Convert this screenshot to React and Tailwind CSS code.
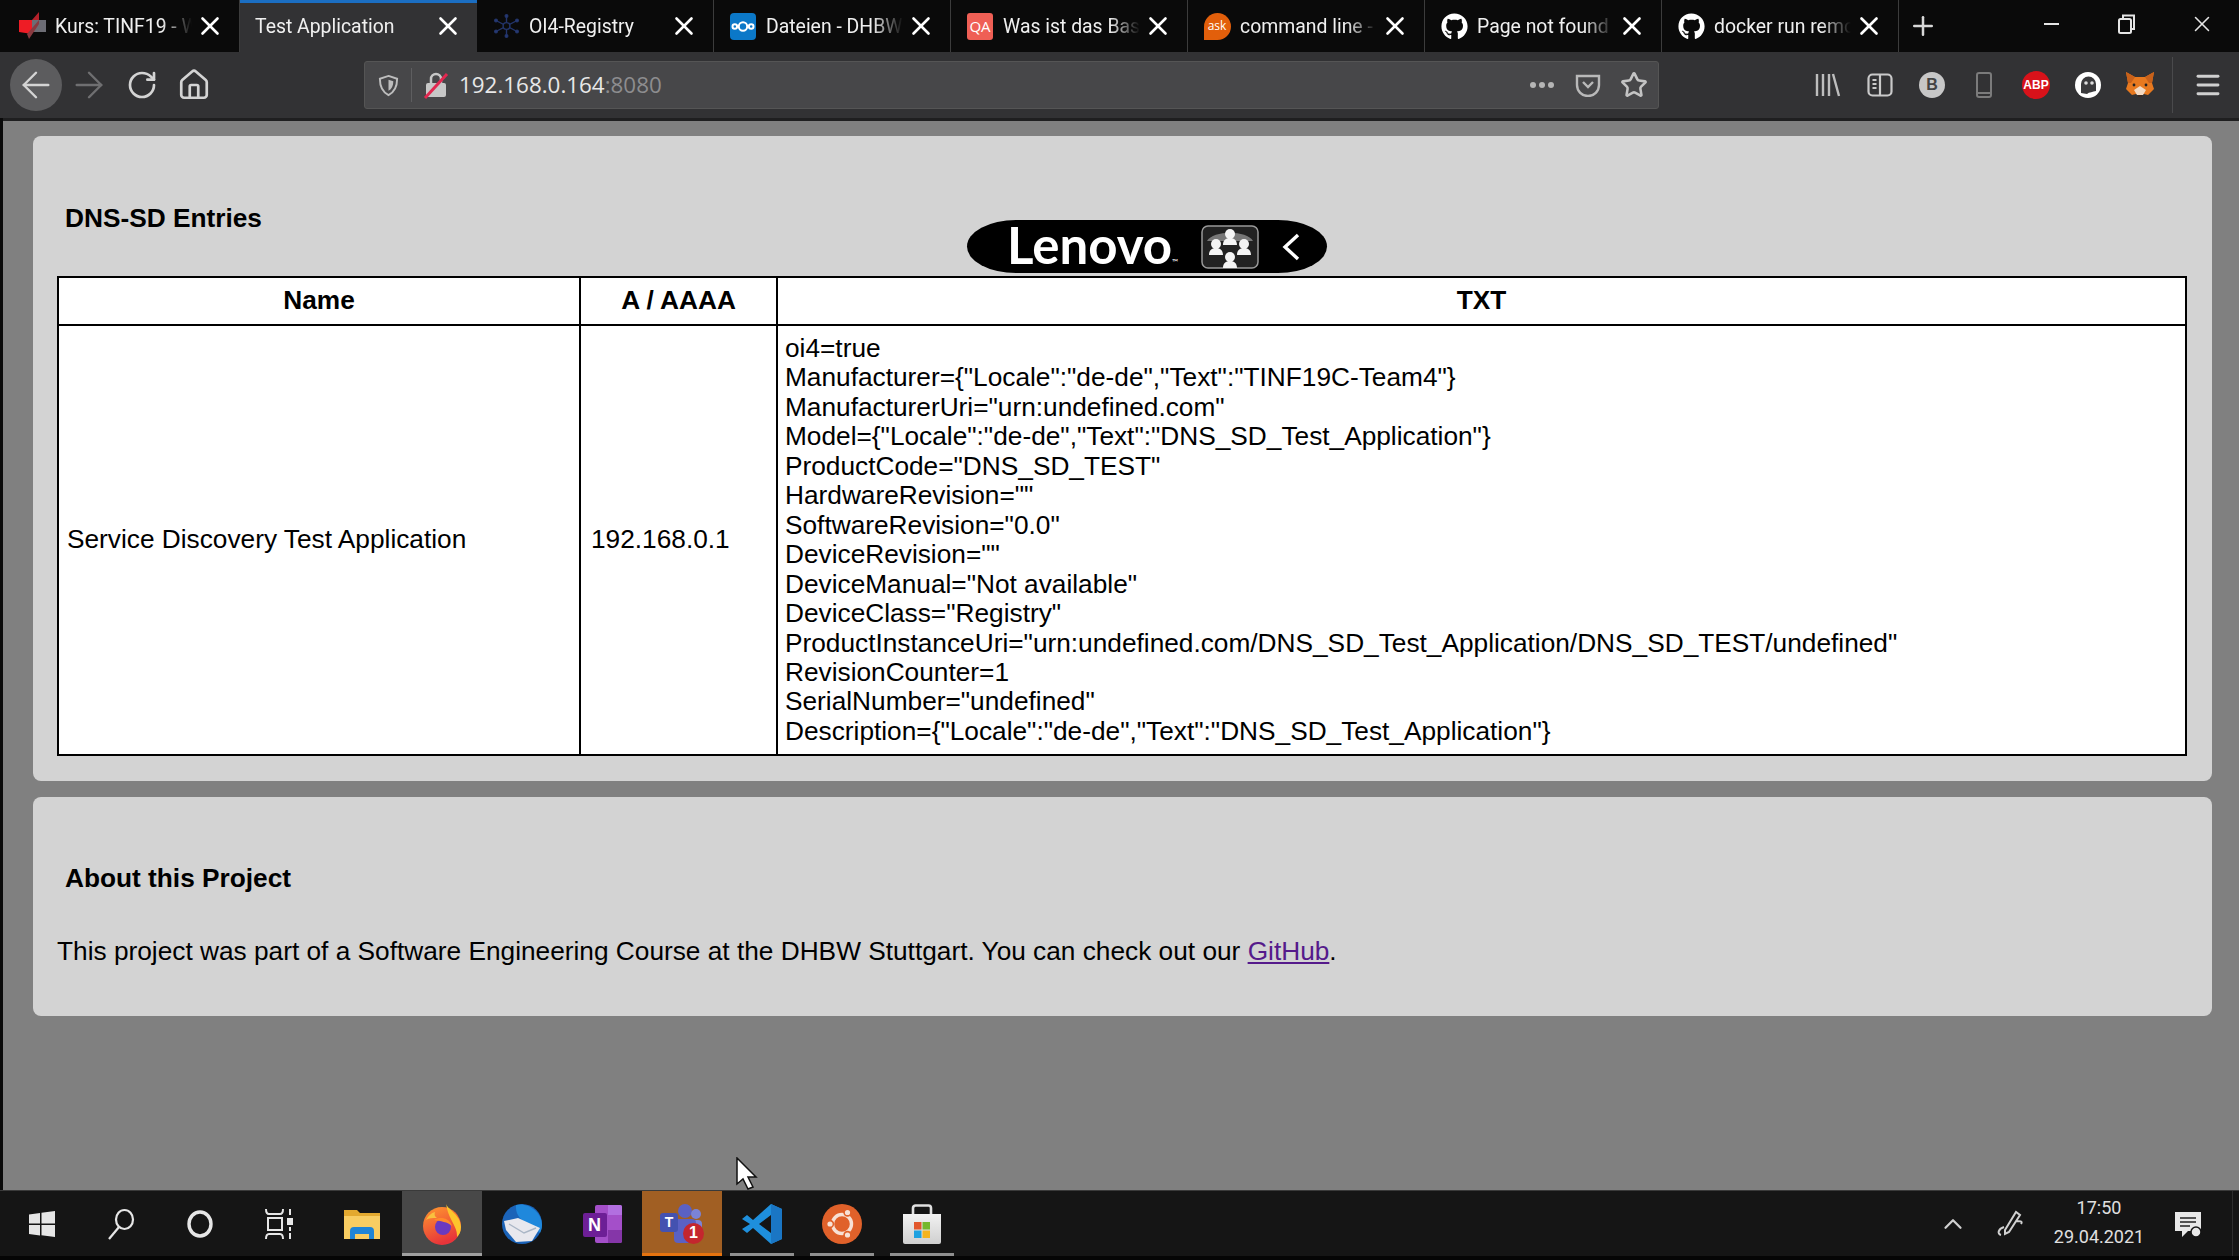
import React from "react";
import { X, Plus, ArrowLeft, ArrowRight, RotateCw, Home, Star, Menu, ChevronUp } from "lucide-react";
import { FaGithub } from "react-icons/fa";

const Moodle = () => (
  <svg width="30" height="28" viewBox="0 0 30 28">
    <path d="M2 8 L15 8 L15 22 L2 20Z" fill="#ee1c25" />
    <path d="M15 8 L29 8 L29 20 L15 20Z" fill="#6d6d75" />
    <path d="M15 8 L22 0 L22 8Z" fill="#b5212a" />
    <path d="M10 22 L22 8 L22 12 L12 27Z" fill="#8a3a40" />
  </svg>
);
const Oi4 = () => (
  <svg width="27" height="24" viewBox="0 0 27 24" stroke="#23356b" strokeWidth="1.4" fill="#2b3f7c">
    <path d="M13.5 1V23M2 6L25 18M25 6L2 18" />
    <circle cx="13.5" cy="12" r="3.4" fill="#0a0a0a" />
    <circle cx="13.5" cy="2" r="1.3" /><circle cx="13.5" cy="22" r="1.3" /><circle cx="3" cy="6.5" r="1.3" />
    <circle cx="24" cy="6.5" r="1.3" /><circle cx="3" cy="17.5" r="1.3" /><circle cx="24" cy="17.5" r="1.3" />
  </svg>
);
const Nextcloud = () => (
  <svg width="26" height="27" viewBox="0 0 26 27">
    <rect width="26" height="27" rx="4" fill="#0b78c8" />
    <g fill="none" stroke="#fff" strokeWidth="2">
      <circle cx="13" cy="13.5" r="4.2" /><circle cx="4.8" cy="13.5" r="2.3" /><circle cx="21.2" cy="13.5" r="2.3" />
    </g>
  </svg>
);
const Qa = () => (
  <div className="flex h-[27px] w-[26px] items-center justify-center rounded-[3px] bg-[#ef5f55] text-[15px] leading-none text-white">QA</div>
);
const Ask = () => (
  <div className="flex h-[27px] w-[27px] items-center justify-center rounded-full rounded-bl-[3px] bg-[#e25f0b] text-[12px] leading-none text-white">ask</div>
);
const Gh = () => <FaGithub className="text-white" size={27} />;

const tabs = [
  { icon: <Moodle />, text: "Kurs: TINF19 - WWI" },
  { text: "Test Application", active: true },
  { icon: <Oi4 />, text: "OI4-Registry" },
  { icon: <Nextcloud />, text: "Dateien - DHBW Cloud" },
  { icon: <Qa />, text: "Was ist das Basis" },
  { icon: <Ask />, text: "command line - docker" },
  { icon: <Gh />, text: "Page not found" },
  { icon: <Gh />, text: "docker run remove" },
];

const Tab = ({ icon, text, active }) => (
  <div
    className={
      "flex h-full w-[237px] shrink-0 items-center pr-[14px] " +
      (active
        ? "border-t-[3px] border-[#1b6ec2] bg-[#323234] pl-[15px]"
        : "border-r border-[#3c3c3c] pl-[11px]")
    }
  >
    {icon && <div className="mr-[5px] flex w-[36px] shrink-0 items-center justify-center">{icon}</div>}
    <span
      className={
        "flex-1 overflow-hidden whitespace-nowrap font-['Roboto'] text-[19.4px] leading-[26px] text-[#f0f0f0] " +
        (active ? "mt-[-2px] " : "mt-[1px] ") +
        "[mask-image:linear-gradient(to_right,#000_78%,transparent_100%)]"
      }
    >
      {text}
    </span>
    <X size={30} strokeWidth={2.1} className={"ml-[3px] shrink-0 text-white " + (active ? "mt-[-3px]" : "")} />
  </div>
);

const Slot = ({ w = "w-[52px]", children }) => (
  <div className={w + " flex h-full shrink-0 items-center justify-center"}>{children}</div>
);

const Shield = ({ size = 24, color = "#bdbdbd" }) => (
  <svg width={size} height={size} viewBox="0 0 24 24" fill="none" stroke={color} strokeWidth="2">
    <path d="M12 2 21 5c0 9-3 14-9 17C6 19 3 14 3 5Z" />
    <path d="M12 6 17 7.6c0 5-1.5 8-5 10Z" fill={color} stroke="none" />
  </svg>
);
const BrokenLock = () => (
  <svg width="26" height="28" viewBox="0 0 26 28">
    <path d="M8 12V8a5 5 0 0 1 10 0v4" fill="none" stroke="#c7c7c7" strokeWidth="2.5" />
    <rect x="3" y="12" width="20" height="14" rx="2" fill="#c7c7c7" />
    <path d="M2 27 24 3" stroke="#e22850" strokeWidth="3" />
  </svg>
);
const Pocket = () => (
  <svg width="26" height="24" viewBox="0 0 26 24" fill="none" stroke="#b9b9b9" strokeWidth="2.4">
    <path d="M2 3h22v9a11 11 0 0 1-22 0Z" />
    <path d="M8 9l5 5 5-5" />
  </svg>
);
const Library = () => (
  <svg width="26" height="24" viewBox="0 0 26 24" stroke="#bdbdbd" strokeWidth="2.4" fill="none">
    <path d="M2 1v22M8 1v22M14 1v22M18 1l6 22" />
  </svg>
);
const Sidebar = () => (
  <svg width="26" height="24" viewBox="0 0 26 24" fill="none" stroke="#c9c9c9" strokeWidth="2.2">
    <rect x="1.5" y="1.5" width="23" height="21" rx="4" />
    <path d="M13 2v20M5.5 7h4M5.5 11h4M5.5 15h4" />
  </svg>
);
const Phone = () => (
  <svg width="16" height="26" viewBox="0 0 16 26" fill="none" stroke="#7b7b7b" strokeWidth="2">
    <rect x="1" y="1" width="14" height="24" rx="2" />
    <path d="M1 21h14" />
  </svg>
);
const Ghostery = () => (
  <svg width="26" height="26" viewBox="0 0 26 26">
    <circle cx="13" cy="13" r="13" fill="#fff" />
    <path d="M6 21V12a7.5 7.5 0 0 1 15 0v7c-3 1-7 1-9 3Z" fill="#3a3a3c" />
    <circle cx="11" cy="11" r="1.8" fill="#ddd" /><circle cx="17" cy="11" r="1.8" fill="#ddd" />
  </svg>
);
const Fox = () => (
  <svg width="28" height="26" viewBox="0 0 28 26">
    <path d="M0 0l9 5h10l9-5-2 11 2 6-6 6-4-1h-8l-4 1-6-6 2-6Z" fill="#e8791f" />
    <path d="M0 0l9 5-4 6H2ZM28 0l-9 5 4 6h3Z" fill="#c9611a" />
    <path d="M8 18l6-4 6 4-3 5h-6Z" fill="#f3d9c2" />
    <path d="M12 23h4v2h-4Z" fill="#3a2a20" />
    <circle cx="8" cy="13" r="1.4" fill="#222" /><circle cx="20" cy="13" r="1.4" fill="#222" />
  </svg>
);
const Restore = () => (
  <svg width="20" height="22" viewBox="0 0 20 22" fill="none" stroke="#e5e5e5" strokeWidth="2">
    <rect x="2" y="6" width="12" height="14" rx="1.5" />
    <path d="M6 6V2.5h11V16h-3" />
  </svg>
);

const Firefox = () => (
  <svg width="38" height="42" viewBox="0 0 38 42">
    <defs>
      <linearGradient id="ffx" x1="0" y1="0" x2="0.4" y2="1">
        <stop offset="0" stopColor="#ff9a2e" />
        <stop offset="1" stopColor="#e8343a" />
      </linearGradient>
    </defs>
    <circle cx="19" cy="23" r="19" fill="url(#ffx)" />
    <path d="M23 0c0 6 15 11 15 24 0 5-2 8-4 10 1-11-9-17-11-34Z" fill="#fdc42c" />
    <circle cx="20" cy="24" r="8" fill="#6a3ac0" />
    <path d="M11 17c6-4 16-2 18 6-4-4-12-5-18-6Z" fill="#ff8a2b" />
    <path d="M3 17c2-4 5-7 9-8-1 3 0 5 2 6-5 0-8 0-11 2Z" fill="#f9c13f" />
  </svg>
);
const Thunderbird = () => (
  <svg width="40" height="40" viewBox="0 0 40 40">
    <circle cx="20" cy="20" r="20" fill="#1b63b8" />
    <path d="M14 1c12-3 26 7 26 20 0 3-1 6-2 8L28 20C20 18 13 11 14 1Z" fill="#1f88dc" />
    <path d="M2 17l14-3 22 10-8 13-16 1-10-12Z" fill="#e8e8ee" />
    <path d="M7 20l15 9 12-5" fill="none" stroke="#aab6c6" strokeWidth="1.4" />
  </svg>
);
const OneNote = () => (
  <div className="relative h-[38px] w-[39px]">
    <div className="absolute right-0 top-0 h-[38px] w-[27px] rounded-[2px] bg-[#a44fc9]" />
    <div className="absolute right-0 top-0 h-[10px] w-[14px] rounded-tr-[2px] bg-[#b26fe0]" />
    <div className="absolute bottom-0 right-0 h-[13px] w-[14px] rounded-br-[2px] bg-[#8536a8]" />
    <div className="absolute left-0 top-[8px] flex h-[24px] w-[24px] items-center justify-center rounded-[2px] bg-[#6d1f96] font-['Liberation_Sans'] text-[18px] font-bold leading-none text-white">N</div>
  </div>
);
const Teams = () => (
  <div className="relative h-[40px] w-[44px]">
    <div className="absolute left-[18px] top-0 h-[14px] w-[14px] rounded-full bg-[#5a61c4]" />
    <div className="absolute left-[31px] top-[5px] h-[10px] w-[10px] rounded-full bg-[#7b83d6]" />
    <div className="absolute left-[32px] top-[16px] h-[14px] w-[10px] rounded-[4px] bg-[#7b83d6]" />
    <div className="absolute left-[14px] top-[15px] h-[24px] w-[22px] rounded-[4px] bg-[#5a61c4]" />
    <div className="absolute left-0 top-[9px] flex h-[19px] w-[18px] items-center justify-center rounded-[3px] bg-[#4452b0] font-['Liberation_Sans'] text-[14px] font-bold leading-none text-white">T</div>
    <div className="absolute bottom-0 right-0 flex h-[21px] w-[21px] items-center justify-center rounded-full bg-[#c4262e] font-['Liberation_Sans'] text-[16px] font-bold leading-none text-white">1</div>
  </div>
);
const VSCode = () => (
  <svg width="40" height="40" viewBox="0 0 40 40">
    <path fillRule="evenodd" d="M29 0 40 5V35L29 40 11 24 5 29 0 25 8 20 0 15 5 11 11 16ZM29 11 17 20 29 29Z" fill="#1e8fdc" />
    <path fillRule="evenodd" d="M29 0 40 5V35L29 40V29 11Z" fill="#1a76c4" />
  </svg>
);
const Ubuntu = () => (
  <svg width="40" height="40" viewBox="0 0 40 40">
    <circle cx="20" cy="20" r="20" fill="#e0612a" />
    <circle cx="20" cy="20" r="9.5" fill="none" stroke="#f7e1d5" strokeWidth="3.4" />
    <g stroke="#e0612a" strokeWidth="1.6" fill="#f7e1d5">
      <circle cx="25.5" cy="8.5" r="3.4" /><circle cx="8" cy="20" r="3.4" /><circle cx="25.5" cy="31" r="3.4" />
    </g>
  </svg>
);
const Store = () => (
  <svg width="40" height="40" viewBox="0 0 40 40">
    <defs>
      <linearGradient id="sto" x1="0" y1="0" x2="0" y2="1">
        <stop offset="0" stopColor="#f2f2f2" />
        <stop offset="1" stopColor="#cfcfcf" />
      </linearGradient>
    </defs>
    <path d="M11 11V4a2.5 2.5 0 0 1 2.5-2.5h13A2.5 2.5 0 0 1 29 4v7" fill="none" stroke="#e0e0e0" strokeWidth="2.6" />
    <path d="M1 10h38v28a2 2 0 0 1-2 2H3a2 2 0 0 1-2-2Z" fill="url(#sto)" />
    <rect x="12" y="18" width="7.5" height="7.5" fill="#e2572c" /><rect x="20.5" y="18" width="7.5" height="7.5" fill="#75b82c" />
    <rect x="12" y="26.5" width="7.5" height="7.5" fill="#1ea1e0" /><rect x="20.5" y="26.5" width="7.5" height="7.5" fill="#f4b31f" />
  </svg>
);
const Explorer = () => (
  <svg width="36" height="30" viewBox="0 0 36 30">
    <path d="M0 1h13l3 3h20v26H0Z" fill="#e3a92f" />
    <path d="M0 7h36v23H0Z" fill="#f8cd62" />
    <path d="M6 30V22a4 4 0 0 1 4-4h16a4 4 0 0 1 4 4v8h-5v-5H11v5Z" fill="#1e84d6" />
  </svg>
);

const TaskSlot = ({ children, bar, bg }) => (
  <div className={"relative flex h-full w-[80px] shrink-0 items-center justify-center " + (bg || "")}>
    {children}
    {bar && <div className={"absolute bottom-0 left-[8px] right-[8px] h-[3px] " + bar} />}
  </div>
);

const txt = [
  "oi4=true",
  'Manufacturer={"Locale":"de-de","Text":"TINF19C-Team4"}',
  'ManufacturerUri="urn:undefined.com"',
  'Model={"Locale":"de-de","Text":"DNS_SD_Test_Application"}',
  'ProductCode="DNS_SD_TEST"',
  'HardwareRevision=""',
  'SoftwareRevision="0.0"',
  'DeviceRevision=""',
  'DeviceManual="Not available"',
  'DeviceClass="Registry"',
  'ProductInstanceUri="urn:undefined.com/DNS_SD_Test_Application/DNS_SD_TEST/undefined"',
  "RevisionCounter=1",
  'SerialNumber="undefined"',
  'Description={"Locale":"de-de","Text":"DNS_SD_Test_Application"}',
];

export default function App() {
  return (
    <div className="relative flex h-[1260px] w-[2239px] flex-col overflow-hidden bg-[#0a0a0a] font-['Open_Sans',sans-serif]">
      {/* tab strip */}
      <div className="flex h-[52px] shrink-0 items-stretch bg-[#0a0a0a] pl-[3px]">
        {tabs.map((t) => (
          <Tab key={t.text} {...t} />
        ))}
        <div className="flex w-[47px] items-center justify-center">
          <Plus size={30} strokeWidth={2} className="text-[#d8d8d8]" />
        </div>
        <div className="flex flex-1 items-start justify-end pt-[8px] text-[#e5e5e5]">
          <div className="flex h-[32px] w-[75px] items-center justify-center"><div className="h-[2px] w-[15px] bg-[#e5e5e5]" /></div>
          <div className="flex h-[32px] w-[75px] items-center justify-center"><Restore /></div>
          <div className="flex h-[32px] w-[75px] items-center justify-center"><X size={26} strokeWidth={1.4} /></div>
        </div>
      </div>

      {/* toolbar */}
      <div className="flex h-[66px] shrink-0 items-center bg-[#323234] pl-[10px]">
        <div className="flex h-[52px] w-[52px] shrink-0 items-center justify-center rounded-full bg-[#5c5c5e]">
          <ArrowLeft size={42} strokeWidth={1.4} className="text-[#d4d4d4]" />
        </div>
        <Slot w="w-[54px]"><ArrowRight size={42} strokeWidth={1.4} className="text-[#6f6f71]" /></Slot>
        <Slot w="w-[52px]"><RotateCw size={32} strokeWidth={2} className="text-[#d4d4d4]" /></Slot>
        <Slot w="w-[52px]"><Home size={34} strokeWidth={1.9} className="text-[#d4d4d4]" /></Slot>
        <div className="ml-[144px] flex h-[48px] w-[1295px] shrink-0 items-center rounded-[3px] border border-[#555] bg-[#474749]">
          <div className="flex w-[46px] items-center justify-center"><Shield size={23} /></div>
          <div className="h-[34px] w-px bg-[#5e5e60]" />
          <div className="flex w-[47px] items-center justify-center"><BrokenLock /></div>
          <div className="flex-1 text-[22.4px] leading-none text-[#e8e8e8]">
            192.168.0.164<span className="text-[#8d8d8f]">:8080</span>
          </div>
          <div className="flex w-[46px] items-center justify-center gap-[3px]">
            <div className="h-[6px] w-[6px] rounded-full bg-[#b5b5b5]" />
            <div className="h-[6px] w-[6px] rounded-full bg-[#b5b5b5]" />
            <div className="h-[6px] w-[6px] rounded-full bg-[#b5b5b5]" />
          </div>
          <div className="flex w-[46px] items-center justify-center"><Pocket /></div>
          <div className="mr-[1px] flex w-[46px] items-center justify-center"><Star size={28} strokeWidth={2.2} className="text-[#c4c4c4]" /></div>
        </div>
        <div className="ml-[143px] flex h-full items-center">
          <Slot><Library /></Slot>
          <Slot><Sidebar /></Slot>
          <Slot>
            <div className="flex h-[26px] w-[26px] items-center justify-center rounded-full bg-[#c7c7c7] font-['Liberation_Sans'] text-[16px] font-bold leading-none text-[#444]">B</div>
          </Slot>
          <Slot><Phone /></Slot>
          <Slot>
            <div className="flex h-[28px] w-[28px] items-center justify-center rounded-full bg-[#d8121a] font-['Liberation_Sans'] text-[12px] font-bold leading-none text-white">ABP</div>
          </Slot>
          <Slot><Ghostery /></Slot>
          <Slot><Fox /></Slot>
          <div className="ml-[6px] h-[56px] w-px bg-[#4a4a4c]" />
          <Slot w="w-[70px]"><Menu size={30} strokeWidth={2.3} className="text-[#d0d0d0]" /></Slot>
        </div>
      </div>

      {/* page */}
      <div className="ml-[3px] flex flex-1 flex-col gap-[16px] border-t-[3px] border-[#1f1f20] bg-[#808080] pl-[30px] pr-[27px] pt-[15px] font-['Liberation_Sans',Arial,sans-serif] text-[26.25px] text-black">
        <section className="relative rounded-[8px] bg-[#d3d3d3] px-[24px] pb-[25px] pt-[64px]">
          <h2 className="mb-[40px] pl-[8px] text-[26.25px] font-bold leading-[36px]">DNS-SD Entries</h2>
          <div className="absolute left-[934px] top-[84px] flex h-[53px] w-[360px] items-center rounded-[50px/27px] bg-black pl-[40px] text-white">
            <span className="mt-[-4px] w-[194px] whitespace-nowrap font-['Lato'] text-[51px] font-bold leading-none">Lenovo<span className="align-[-1px] text-[8px] font-normal">™</span></span>
            <svg width="58" height="44" viewBox="0 0 58 44" className="shrink-0">
              <rect x="1" y="1" width="56" height="42" rx="6" fill="#222" stroke="#999" strokeWidth="1.5" />
              <path d="M6 16C12 5 46 5 52 16Z" fill="#777" />
              {[[29, 9], [15, 19], [43, 19], [29, 32]].map(([x, y]) => (
                <g key={x + "-" + y} fill="#f4f4f4">
                  <circle cx={x} cy={y} r="5" />
                  <path d={`M${x - 7} ${y + 11}c0-5 3-6 5-7h4c2 1 5 2 5 7Z`} />
                </g>
              ))}
            </svg>
            <svg width="18" height="28" viewBox="0 0 18 28" className="ml-[23px] shrink-0" fill="none" stroke="#fff" strokeWidth="3.4">
              <path d="M16 2 3 14l13 12" />
            </svg>
          </div>
          <table className="w-[2130px] table-fixed border-collapse bg-white leading-[29.46px]">
            <colgroup>
              <col className="w-[522px]" />
              <col className="w-[197px]" />
              <col />
            </colgroup>
            <thead>
              <tr>
                <th className="h-[48px] border-2 border-black p-0 text-center font-bold">Name</th>
                <th className="h-[48px] border-2 border-black p-0 text-center font-bold">A / AAAA</th>
                <th className="h-[48px] border-2 border-black p-0 text-center font-bold">TXT</th>
              </tr>
            </thead>
            <tbody>
              <tr>
                <td className="border-2 border-black py-0 pl-[8px] pr-0">Service Discovery Test Application</td>
                <td className="border-2 border-black py-0 pl-[10px] pr-0">192.168.0.1</td>
                <td className="border-2 border-black pb-[8px] pl-[7px] pr-0 pt-[8px]">
                  {txt.map((l) => (
                    <div key={l} className="whitespace-nowrap">{l}</div>
                  ))}
                </td>
              </tr>
            </tbody>
          </table>
        </section>
        <section className="h-[219px] rounded-[8px] bg-[#d3d3d3] px-[24px] pt-[63px]">
          <h2 className="mb-[37px] pl-[8px] text-[26.25px] font-bold leading-[36px]">About this Project</h2>
          <p className="leading-[36px]">
            This project was part of a Software Engineering Course at the DHBW Stuttgart. You can check out our{" "}
            <a className="text-[#551a8b] underline" href="#github">GitHub</a>.
          </p>
        </section>
      </div>

      {/* taskbar */}
      <div className="flex h-[66px] shrink-0 items-stretch border-t border-[#3a3a3a] bg-[#151515] pl-[2px]">
        <TaskSlot>
          <svg width="30" height="30" viewBox="0 0 30 30" fill="#e6e6e6">
            <path d="M2 5.5 13 4v10.5H2ZM14.5 3.8 28 2v12.5H14.5ZM2 16h11v10.5L2 25ZM14.5 16H28v12l-13.5-1.8Z" />
          </svg>
        </TaskSlot>
        <TaskSlot>
          <svg width="30" height="32" viewBox="0 0 30 32" fill="none" stroke="#e6e6e6" strokeWidth="2.2" className="-translate-x-[1px]">
            <ellipse cx="18.5" cy="11.5" rx="8.5" ry="9.5" /><path d="M13 19 3 31" />
          </svg>
        </TaskSlot>
        <TaskSlot>
          <svg width="28" height="30" viewBox="0 0 28 30" fill="none" stroke="#e6e6e6" strokeWidth="3.4" className="-translate-x-[2px]">
            <ellipse cx="14" cy="15" rx="11" ry="12" />
          </svg>
        </TaskSlot>
        <TaskSlot>
          <svg width="28" height="32" viewBox="0 0 28 32" fill="none" stroke="#e6e6e6" strokeWidth="2" className="-translate-x-[3px]">
            <path d="M1 1c0 4 1 5 3 5h11c2 0 3-1 3-5M1 31c0-4 1-5 3-5h11c2 0 3 1 3 5" />
            <rect x="3" y="10" width="14" height="12" /><path d="M25 1v6M25 25v6" /><rect x="23" y="11" width="4" height="5" fill="#e6e6e6" /><path d="M25 19v4" />
          </svg>
        </TaskSlot>
        <TaskSlot><Explorer /></TaskSlot>
        <TaskSlot bg="bg-[#484848]" bar="!left-0 !right-0 bg-[#a0a0a0]"><Firefox /></TaskSlot>
        <TaskSlot><Thunderbird /></TaskSlot>
        <TaskSlot><OneNote /></TaskSlot>
        <TaskSlot bg="bg-[#a15f23]" bar="!left-0 !right-0 bg-[#e5730f]"><Teams /></TaskSlot>
        <TaskSlot bar="bg-[#8f8f8f]"><VSCode /></TaskSlot>
        <TaskSlot bar="bg-[#8f8f8f]"><Ubuntu /></TaskSlot>
        <TaskSlot bar="bg-[#8f8f8f]"><Store /></TaskSlot>
        <div className="flex-1" />
        <div className="flex w-[58px] items-center justify-center"><ChevronUp size={30} strokeWidth={1.8} className="text-[#d0d0d0]" /></div>
        <div className="flex w-[58px] items-center justify-center">
          <svg width="30" height="30" viewBox="0 0 30 30" fill="none" stroke="#d0d0d0" strokeWidth="2">
            <path d="M9 21 20 3l4 3-11 17-4 2ZM20 12c4 0 7 0 5 3M8 18c-6 2-7 7-3 8" />
          </svg>
        </div>
        <div className="flex w-[118px] flex-col items-center justify-center gap-[9px] pb-[3px] text-[#e0e0e0]">
          <span className="font-['Roboto'] text-[18px] leading-[20px]">17:50</span>
          <span className="font-['Roboto'] text-[18px] leading-[20px]">29.04.2021</span>
        </div>
        <div className="flex w-[60px] items-center justify-center">
          <svg width="28" height="28" viewBox="0 0 28 28">
            <path d="M1 2h26v19H14l-6 6v-6H1Z" fill="#e8e8e8" />
            <path d="M6 8h16M6 12h16M6 16h10" stroke="#222" strokeWidth="1.6" />
            <circle cx="22" cy="22" r="5" fill="#e8e8e8" stroke="#151515" strokeWidth="1.5" />
          </svg>
        </div>
        <div className="w-[14px]" />
        <div className="w-[7px] border-l border-[#2e2e2e]" />
      </div>
      <div className="h-[4px] shrink-0 bg-[#050505]" />

      {/* mouse pointer */}
      <svg width="24" height="34" viewBox="0 0 24 34" className="absolute left-[735px] top-[1157px]">
        <path d="M2 1v26l6-5 5 10 5-2-5-10h8Z" fill="#fff" stroke="#111" strokeWidth="1.5" />
      </svg>
    </div>
  );
}
